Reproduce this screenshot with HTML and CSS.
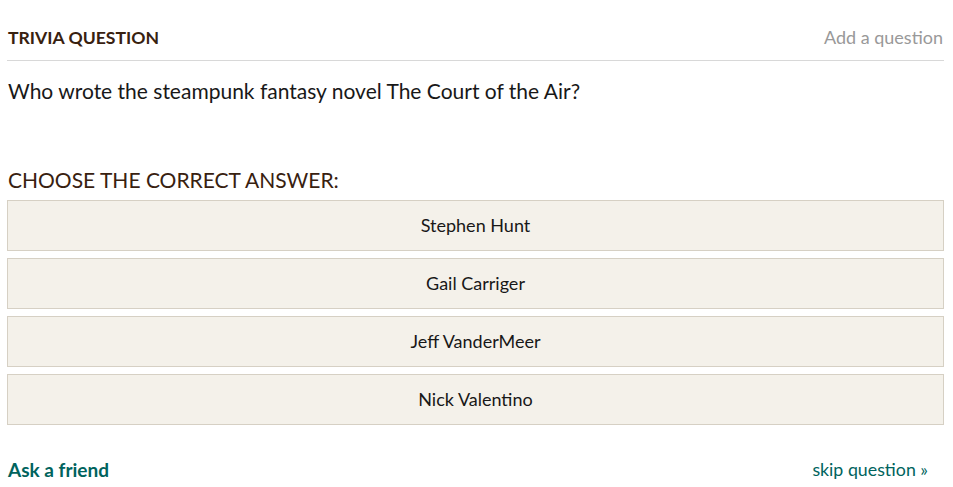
FILE: index.html
```html
<!DOCTYPE html>
<html lang="en">
<head>
<meta charset="utf-8">
<title>Trivia Question</title>
<link rel="stylesheet" href="styles.css">
</head>
<body>
<div class="trivia">
  <div class="trivia-header">
    <h2 class="trivia-title">TRIVIA QUESTION</h2>
    <a class="add-link" href="#">Add a question</a>
  </div>
  <p class="question">Who wrote the steampunk fantasy novel The Court of the Air?</p>
  <h3 class="choose">CHOOSE THE CORRECT ANSWER:</h3>
  <div class="answers">
    <button class="answer">Stephen Hunt</button>
    <button class="answer">Gail Carriger</button>
    <button class="answer">Jeff VanderMeer</button>
    <button class="answer">Nick Valentino</button>
  </div>
  <div class="trivia-footer">
    <a class="ask-link" href="#">Ask a friend</a>
    <a class="skip-link" href="#">skip question &raquo;</a>
  </div>
</div>
</body>
</html>
```

FILE: styles.css
```css
html, body {
  margin: 0;
  padding: 0;
  background: #ffffff;
}

body {
  font-family: Lato, "Open Sans", "Liberation Sans", sans-serif;
  color: #181818;
}

.trivia {
  padding: 0 9px 0 7px;
}

.trivia-header {
  display: flex;
  justify-content: space-between;
  align-items: baseline;
  padding: 27px 0 12px 1px;
  border-bottom: 1px solid #d8d8d8;
}

.trivia-title {
  margin: 0;
  font-size: 17.6px;
  line-height: 21px;
  font-weight: 700;
  color: #382110;
}

.add-link {
  font-size: 18px;
  line-height: 21px;
  color: #999999;
  text-decoration: none;
  margin-right: 1px;
}

.question {
  margin: 17px 0 0 1px;
  font-size: 21px;
  line-height: 25px;
  color: #181818;
}

.choose {
  margin: 64px 0 8px 1px;
  font-size: 21px;
  line-height: 25px;
  font-weight: 400;
  color: #382110;
}

.answers {
  display: flex;
  flex-direction: column;
  gap: 7px;
}

.answer {
  box-sizing: border-box;
  height: 51px;
  width: 100%;
  margin: 0;
  padding: 0 0 2px;
  background: #f4f1ea;
  border: 1px solid #d6d0c4;
  font-family: inherit;
  font-size: 18px;
  color: #181818;
  text-align: center;
  cursor: pointer;
}

.trivia-footer {
  display: flex;
  justify-content: space-between;
  align-items: baseline;
  margin-top: 33px;
  padding-left: 1px;
}

.ask-link {
  font-size: 19px;
  line-height: 24px;
  font-weight: 700;
  color: #00635d;
  text-decoration: none;
}

.skip-link {
  font-size: 17.8px;
  line-height: 24px;
  color: #00635d;
  text-decoration: none;
  margin-right: 16px;
  position: relative;
  top: -1px;
}
```
